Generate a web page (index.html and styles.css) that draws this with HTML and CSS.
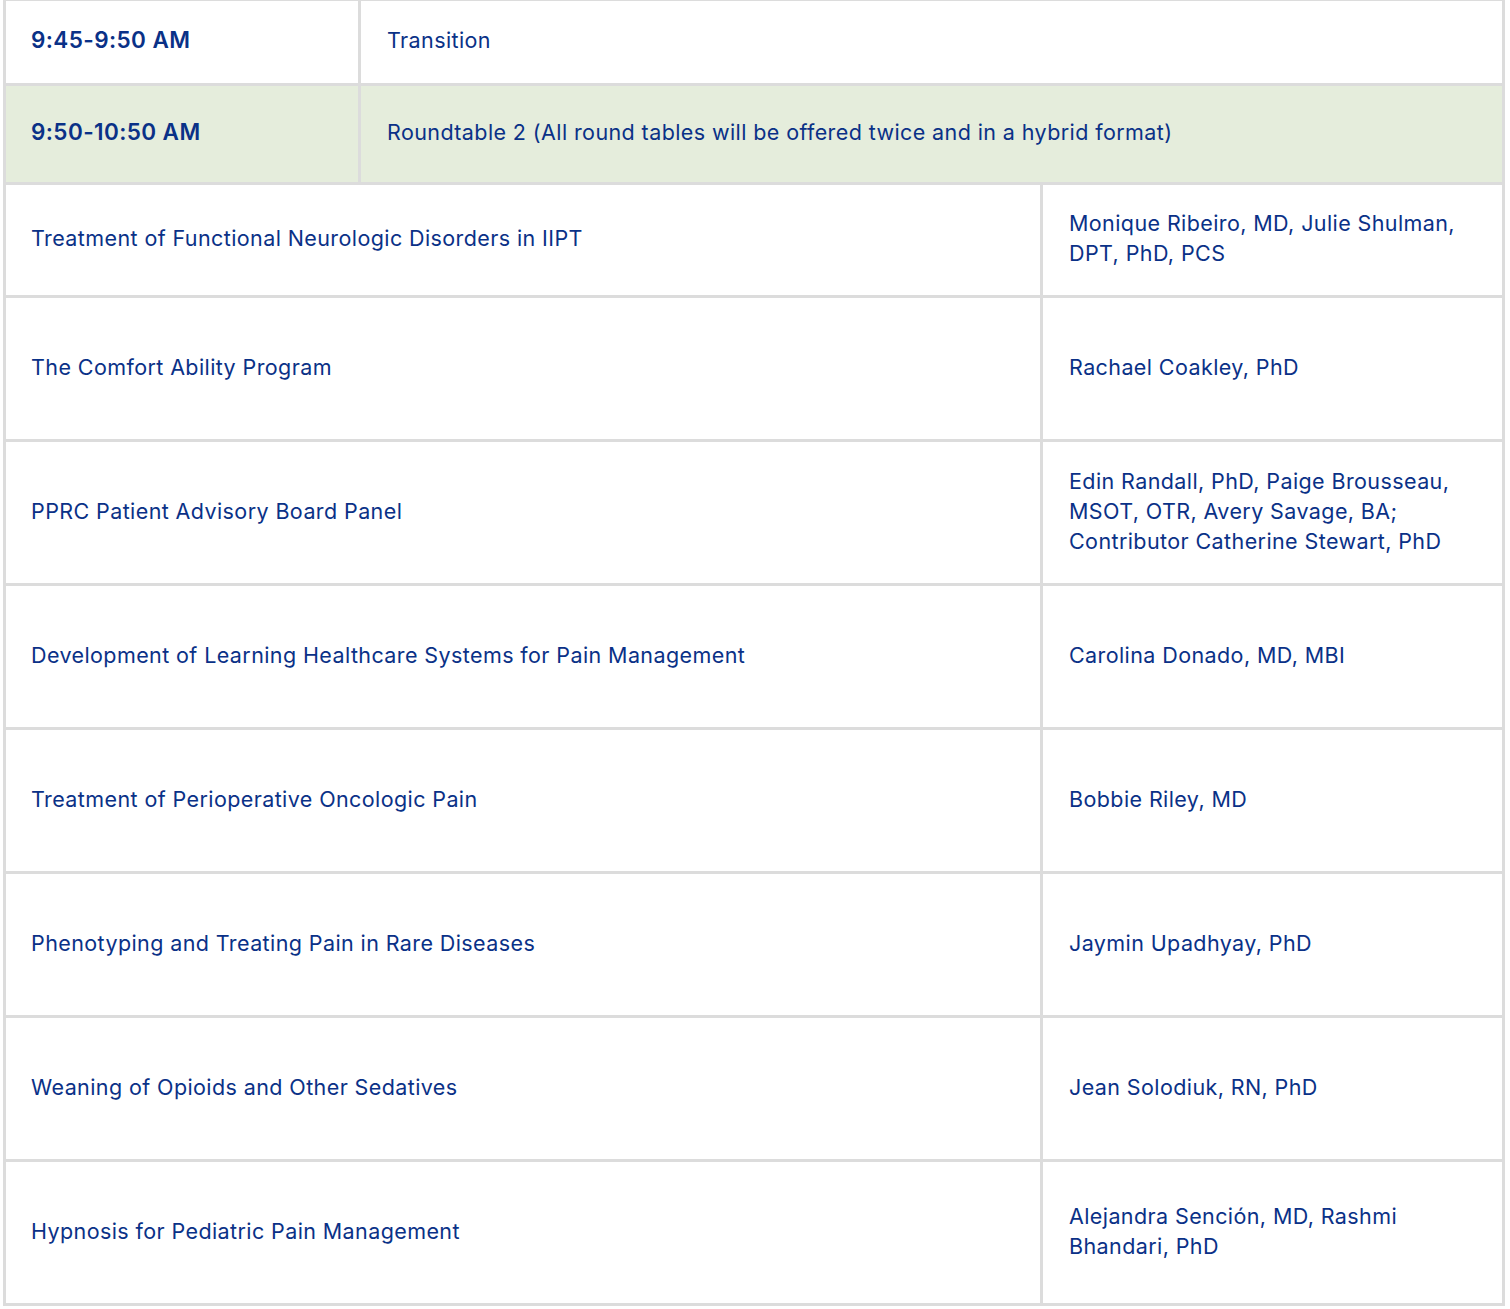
FILE: index.html
```html
<!DOCTYPE html>
<html lang="en">
<head>
<meta charset="utf-8">
<title>Schedule</title>
<link rel="stylesheet" href="styles.css">
</head>
<body>
<div class="schedule">
  <div class="cell time">9:45-9:50 AM</div>
  <div class="cell span2">Transition</div>

  <div class="cell time green">9:50-10:50 AM</div>
  <div class="cell span2 green">Roundtable 2 (All round tables will be offered twice and in a hybrid format)</div>

  <div class="cell span-left">Treatment of Functional Neurologic Disorders in IIPT</div>
  <div class="cell names">Monique Ribeiro, MD, Julie Shulman,<br>DPT, PhD, PCS</div>

  <div class="cell span-left">The Comfort Ability Program</div>
  <div class="cell names">Rachael Coakley, PhD</div>

  <div class="cell span-left">PPRC Patient Advisory Board Panel</div>
  <div class="cell names">Edin Randall, PhD, Paige Brousseau,<br>MSOT, OTR, Avery Savage, BA;<br>Contributor Catherine Stewart, PhD</div>

  <div class="cell span-left">Development of Learning Healthcare Systems for Pain Management</div>
  <div class="cell names">Carolina Donado, MD, MBI</div>

  <div class="cell span-left">Treatment of Perioperative Oncologic Pain</div>
  <div class="cell names">Bobbie Riley, MD</div>

  <div class="cell span-left">Phenotyping and Treating Pain in Rare Diseases</div>
  <div class="cell names">Jaymin Upadhyay, PhD</div>

  <div class="cell span-left">Weaning of Opioids and Other Sedatives</div>
  <div class="cell names">Jean Solodiuk, RN, PhD</div>

  <div class="cell span-left">Hypnosis for Pediatric Pain Management</div>
  <div class="cell names">Alejandra Sención, MD, Rashmi<br>Bhandari, PhD</div>
</div>
</body>
</html>
```

FILE: styles.css
```css
html, body {
  margin: 0;
  padding: 0;
  background: #ffffff;
}

body {
  font-family: "Inter", "Open Sans", sans-serif;
  color: #0a3187;
}

.schedule {
  display: grid;
  grid-template-columns: 352px 679px 459px;
  grid-template-rows: 82px 96px 110px repeat(7, 141px);
  gap: 3px;
  padding: 3px;
  margin: -2px 0 0 3px;
  width: 1496px;
  background: #dcdcdc;
}

.cell {
  background: #ffffff;
  display: flex;
  align-items: center;
  padding: 0 16px 4px 26px;
  font-size: 21.5px;
  line-height: 30px;
  letter-spacing: 0.4px;
}

.time {
  font-weight: 600;
  font-size: 22.5px;
  padding-left: 25px;
}

.span2 { grid-column: 2 / 4; }
.span-left { grid-column: 1 / 3; padding-left: 25px; }

.green { background: #e5eddc; }
```
